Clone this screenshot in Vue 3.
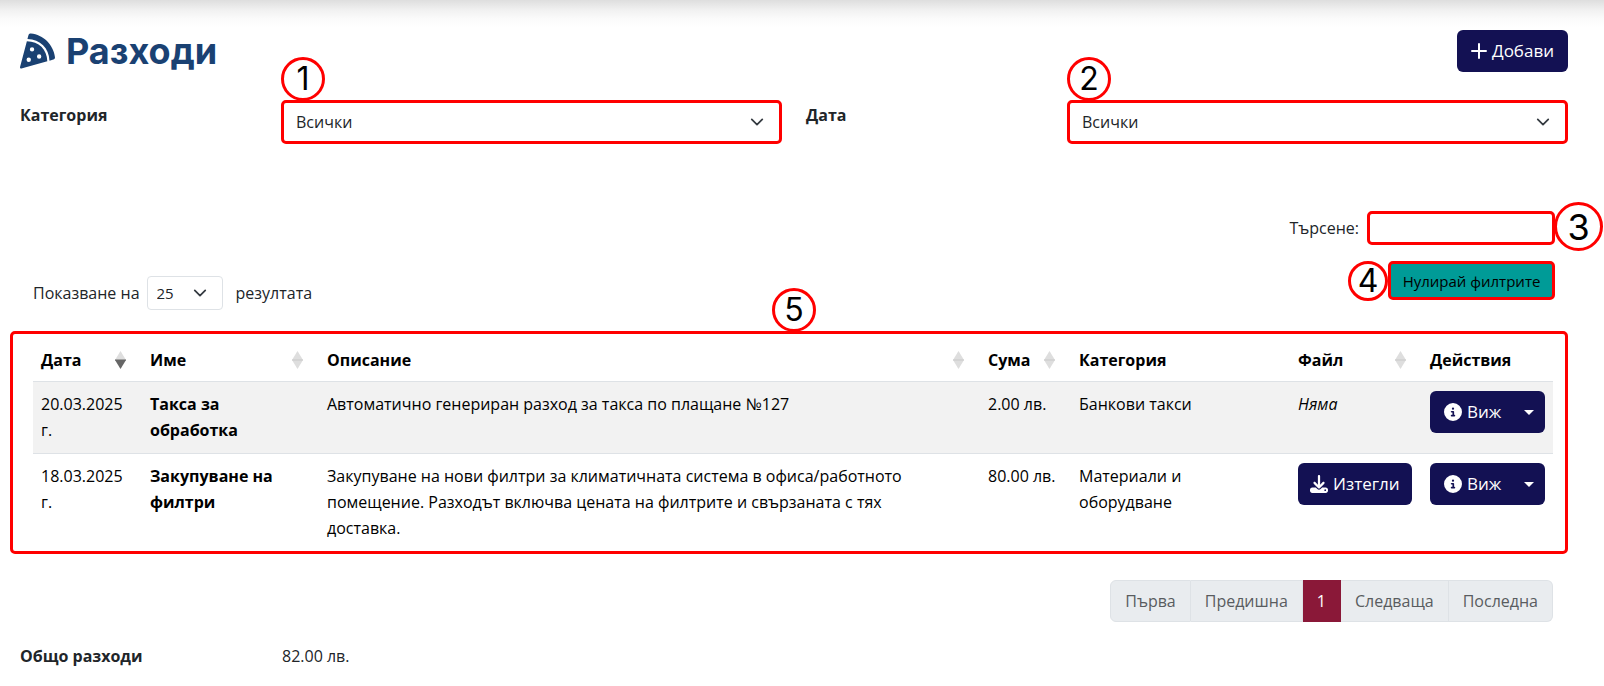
<template>
  <main class="page">
    <header class="page-header">
      <h1 class="page-title">
        <svg class="title-icon" viewBox="0 0 512 512" aria-hidden="true">
          <path d="M158.87.15c-16.16-1.52-31.2 8.42-35.33 24.12l-14.81 56.27c187.62 5.49 314.54 130.61 322.48 317l56.94-15.78c15.72-4.36 25.49-19.68 23.62-35.9C490.89 165.08 340.78 17.32 158.87.15zm-58.47 112L.55 491.64a16.21 16.21 0 0 0 20 19.75l379-105.1c-4.27-174.89-123.08-292.14-299.15-294.1zM128 416a32 32 0 1 1 32-32 32 32 0 0 1-32 32zm48-152a32 32 0 1 1 32-32 32 32 0 0 1-32 32zm104 104a32 32 0 1 1 32-32 32 32 0 0 1-32 32z" />
        </svg>
        <span lang="bg">Разходи</span>
      </h1>
      <button type="button" class="btn">
        <svg class="btn-icon plus" viewBox="0 0 16 16" aria-hidden="true">
          <path d="M8 1v14M1 8h14" />
        </svg>
        Добави
      </button>
    </header>

    <section class="filters">
      <div v-for="(filter, i) in filters" :key="filter.id" class="filter">
        <label :for="filter.id">{{ filter.label }}</label>
        <div class="select-box marked">
          <span class="marker marker-above">{{ i + 1 }}</span>
          <select :id="filter.id" v-model="filter.value">
            <option>Всички</option>
          </select>
          <svg class="chevron" viewBox="0 0 16 16" aria-hidden="true"><path d="m2 5 6 6 6-6" /></svg>
        </div>
      </div>
    </section>

    <section class="toolbar">
      <div class="page-length">
        <label for="length">Показване на</label>
        <div class="select-box length-box">
          <select id="length" v-model="pageLength">
            <option>10</option>
            <option>25</option>
            <option>50</option>
          </select>
          <svg class="chevron" viewBox="0 0 16 16" aria-hidden="true"><path d="m2 5 6 6 6-6" /></svg>
        </div>
        <span class="length-suffix">резултата</span>
      </div>
      <div class="search-area">
        <div class="search">
          <label for="search">Търсене:</label>
          <div class="search-box marked">
            <input id="search" v-model="search" type="search" />
            <span class="marker marker-right">3</span>
          </div>
        </div>
        <div class="reset-box">
          <span class="marker marker-left">4</span>
          <button type="button" class="reset marked" @click="resetFilters">Нулирай филтрите</button>
        </div>
      </div>
    </section>

    <section class="table-box marked">
      <span class="marker marker-middle">5</span>
      <table>
        <colgroup>
          <col class="col-date" />
          <col class="col-name" />
          <col />
          <col class="col-sum" />
          <col class="col-category" />
          <col class="col-file" />
          <col class="col-actions" />
        </colgroup>
        <thead>
          <tr>
            <th v-for="column in columns" :key="column.title" scope="col">
              <div class="th-inner">
                {{ column.title }}
                <svg v-if="column.sort" :class="['sort', column.sort]" viewBox="0 0 11 18" aria-hidden="true">
                  <path class="up" d="M0 9 5.5 0 11 9z" />
                  <path class="down" d="M0 9h11l-5.5 9z" />
                  <path class="mid" d="M0 8.5h11v1H0z" />
                </svg>
              </div>
            </th>
          </tr>
        </thead>
        <tbody>
          <tr v-for="row in rows" :key="row.date">
            <td>{{ row.date }}</td>
            <td class="name">{{ row.name }}</td>
            <td class="long">{{ row.description }}</td>
            <td class="sum">{{ row.sum }}</td>
            <td class="long">{{ row.category }}</td>
            <td>
              <button v-if="row.file" type="button" class="btn">
                <svg class="btn-icon" viewBox="0 0 512 512" aria-hidden="true">
                  <path d="M288 32c0-17.7-14.3-32-32-32s-32 14.3-32 32V274.7l-73.4-73.4c-12.5-12.5-32.8-12.5-45.3 0s-12.5 32.8 0 45.3l128 128c12.5 12.5 32.8 12.5 45.3 0l128-128c12.5-12.5 12.5-32.8 0-45.3s-32.8-12.5-45.3 0L288 274.7V32zM64 352c-35.3 0-64 28.7-64 64v32c0 35.3 28.7 64 64 64H448c35.3 0 64-28.7 64-64V416c0-35.3-28.7-64-64-64H346.5l-45.3 45.3c-25 25-65.5 25-90.5 0L165.5 352H64zm368 56a24 24 0 1 1 0 48 24 24 0 1 1 0-48z" />
                </svg>
                Изтегли
              </button>
              <em v-else>Няма</em>
            </td>
            <td>
              <div class="btn-group">
                <button type="button" class="btn">
                  <svg class="btn-icon" viewBox="0 0 512 512" aria-hidden="true">
                    <path d="M256 512A256 256 0 1 0 256 0a256 256 0 1 0 0 512zM216 336h24V272H216c-13.3 0-24-10.7-24-24s10.7-24 24-24h48c13.3 0 24 10.7 24 24v88h8c13.3 0 24 10.7 24 24s-10.7 24-24 24H216c-13.3 0-24-10.7-24-24s10.7-24 24-24zm40-208a32 32 0 1 1 0 64 32 32 0 1 1 0-64z" />
                  </svg>
                  Виж
                </button>
                <button type="button" class="btn toggle" aria-label="Още действия">
                  <svg class="caret" viewBox="0 0 10 5" aria-hidden="true"><path d="M0 0h10L5 5z" /></svg>
                </button>
              </div>
            </td>
          </tr>
        </tbody>
      </table>
    </section>

    <nav class="pagination" aria-label="Страници">
      <button
        v-for="item in pages"
        :key="item"
        type="button"
        :class="['page-link', { active: item === '1' }]"
        :disabled="item !== '1'"
      >{{ item }}</button>
    </nav>

    <dl class="total">
      <dt>Общо разходи</dt>
      <dd>82.00 лв.</dd>
    </dl>
  </main>
</template>

<script setup>
import { ref } from "vue";

const filters = ref([
  { id: "category", label: "Категория", value: "Всички" },
  { id: "date", label: "Дата", value: "Всички" },
]);
const pageLength = ref("25");
const search = ref("");

const columns = [
  { title: "Дата", sort: "desc" },
  { title: "Име", sort: "both" },
  { title: "Описание", sort: "both" },
  { title: "Сума", sort: "both" },
  { title: "Категория" },
  { title: "Файл", sort: "both" },
  { title: "Действия" },
];

const rows = [
  {
    date: "20.03.2025 г.",
    name: "Такса за обработка",
    description: "Автоматично генериран разход за такса по плащане №127",
    sum: "2.00 лв.",
    category: "Банкови такси",
    file: false,
  },
  {
    date: "18.03.2025 г.",
    name: "Закупуване на филтри",
    description:
      "Закупуване на нови филтри за климатичната система в офиса/работното помещение. Разходът включва цената на филтрите и свързаната с тях доставка.",
    sum: "80.00 лв.",
    category: "Материали и оборудване",
    file: true,
  },
];

const pages = ["Първа", "Предишна", "1", "Следваща", "Последна"];

function resetFilters() {
  filters.value.forEach((filter) => (filter.value = "Всички"));
  search.value = "";
}
</script>

<style>
body {
  margin: 0;
  background: #fff;
}
</style>

<style scoped>
.page {
  padding: 30px 36px 16px 20px;
  background: linear-gradient(#dedede, #f1f1f1 10px, #fbfbfb 19px, #fff 27px) no-repeat;
  color: #212529;
  font-family: "Open Sans", "Noto Sans", sans-serif;
  font-size: 16px;
  line-height: 26px;
}
.page * {
  box-sizing: border-box;
}
button,
select,
input {
  margin: 0;
  font: inherit;
  color: inherit;
}
.page-header {
  display: flex;
  justify-content: space-between;
  align-items: center;
}
.page-title {
  display: flex;
  align-items: center;
  gap: 11px;
  margin: 0;
  color: #1a4172;
  font-family: Inter, sans-serif;
  font-size: 36px;
  font-weight: 700;
  line-height: 42px;
}
.title-icon {
  width: 35px;
  height: 36px;
  fill: currentColor;
}
.btn {
  display: inline-flex;
  align-items: center;
  gap: 5px;
  height: 42px;
  padding: 0 14px;
  border: 0;
  border-radius: 6px;
  background: #131153;
  color: #fff;
  font-size: 17px;
  white-space: nowrap;
}
.btn-icon {
  width: 18px;
  height: 18px;
  fill: currentColor;
}
.plus {
  width: 16px;
  fill: none;
  stroke: currentColor;
  stroke-width: 2;
  stroke-linecap: round;
}

/* red numbered callouts */
.marked {
  position: relative;
  border: 3px solid #f00;
  border-radius: 5px;
}
.marker {
  position: absolute;
  display: flex;
  align-items: center;
  justify-content: center;
  width: 44px;
  height: 44px;
  border: 3px solid #f00;
  border-radius: 50%;
  color: #000;
  font-family: Inter, sans-serif;
  font-size: 32px;
  line-height: 32px;
}
.marker-above {
  left: -3px;
  bottom: calc(100% + 2px);
}
.marker-right {
  left: calc(100% + 2px);
  top: -12px;
  width: 49px;
  height: 49px;
  font-size: 36px;
}
.marker-left {
  right: 100%;
  top: 0;
  width: 40px;
  height: 40px;
}
.marker-middle {
  left: 50%;
  bottom: calc(100% + 2px);
  margin-left: -17px;
}

.filters {
  display: grid;
  grid-template-columns: 1fr 1fr;
  gap: 24px;
  margin-top: 28px;
}
.filter {
  display: flex;
}
.filter label {
  width: calc((100% + 21px) / 3);
  padding-top: 2px;
  font-weight: 700;
}
.select-box {
  position: relative;
  flex: 1;
}
.select-box select {
  display: block;
  width: 100%;
  height: 38px;
  padding: 0 36px 0 12px;
  border: 0;
  background: none;
  appearance: none;
}
.chevron {
  position: absolute;
  top: 50%;
  right: 15px;
  width: 14px;
  height: 14px;
  margin-top: -7px;
  fill: none;
  stroke: #343a40;
  stroke-width: 2;
  stroke-linecap: round;
  stroke-linejoin: round;
  pointer-events: none;
}

.toolbar {
  display: flex;
  justify-content: space-between;
  align-items: flex-end;
  margin: 67px 13px 0 13px;
}
.page-length {
  display: flex;
  align-items: center;
}
.length-box {
  flex: none;
  width: 76px;
  margin: 0 13px 0 7px;
  border: 1px solid #dee2e6;
  border-radius: 4px;
}
.length-box select {
  height: 32px;
  padding: 0 30px 0 9px;
  font-size: 15px;
}
.search-area {
  display: flex;
  flex-direction: column;
  align-items: flex-end;
  gap: 16px;
  padding-bottom: 10px;
}
.search {
  display: flex;
  align-items: center;
  gap: 8px;
}
.search-box {
  width: 188px;
}
.search-box input {
  display: block;
  width: 100%;
  height: 28px;
  padding: 0 8px;
  border: 0;
  background: none;
}
.reset-box {
  position: relative;
}
.reset {
  display: block;
  width: 167px;
  height: 39px;
  padding: 0;
  background: #009b97;
  color: #000;
  font-size: 15px;
}

.table-box {
  margin: 21px 0 0 -10px;
  padding: 5px 12px 0 20px;
}
table {
  width: 100%;
  border-collapse: separate;
  border-spacing: 0;
  table-layout: fixed;
  color: #000;
}
.col-date { width: 109px; }
.col-name { width: 177px; }
.col-sum { width: 91px; }
.col-category { width: 219px; }
.col-file { width: 132px; }
.col-actions { width: 131px; }
th,
td {
  padding: 8px;
  text-align: left;
  vertical-align: top;
}
td {
  padding-top: 9px;
}
th {
  border-bottom: 1px solid #dee2e6;
}
.th-inner {
  display: flex;
  justify-content: space-between;
  align-items: center;
  padding-right: 8px;
}
.sort {
  width: 11px;
  height: 18px;
  fill: #dedede;
}
.mid {
  fill: #c8c8c8;
}
.desc .down,
.desc .mid {
  fill: #666;
}
tbody tr {
  height: 72px;
}
tbody tr:nth-child(odd) td {
  background: #f2f2f2;
  border-bottom: 1px solid #dee2e6;
}
tbody tr:last-child {
  height: 97px;
}
.name {
  font-weight: 700;
}
.long {
  padding-right: 32px;
}
.sum {
  white-space: nowrap;
}
td .btn {
  padding: 0 12px;
}
.btn-group {
  display: flex;
}
.btn-group .btn:first-child {
  flex: 1;
  padding-left: 14px;
  border-radius: 6px 0 0 6px;
}
.btn-group .toggle {
  padding: 0 11px;
  border-radius: 0 6px 6px 0;
}
.caret {
  width: 10px;
  height: 5px;
  fill: currentColor;
}

.pagination {
  display: flex;
  justify-content: flex-end;
  margin: 26px 15px 0 0;
}
.page-link {
  height: 42px;
  padding: 0 14px;
  border: 1px solid #dee2e6;
  border-left-width: 0;
  background: #e9ecef;
  color: #595c5f;
}
.page-link:first-child {
  border-left-width: 1px;
  border-radius: 6px 0 0 6px;
}
.page-link:last-child {
  border-radius: 0 6px 6px 0;
}
.page-link.active {
  border-color: #8a1838;
  background: #8a1838;
  color: #fff;
}

.total {
  display: flex;
  margin: 21px 0 0;
}
.total dt {
  width: 262px;
  font-weight: 700;
}
.total dd {
  margin: 0;
}
</style>
